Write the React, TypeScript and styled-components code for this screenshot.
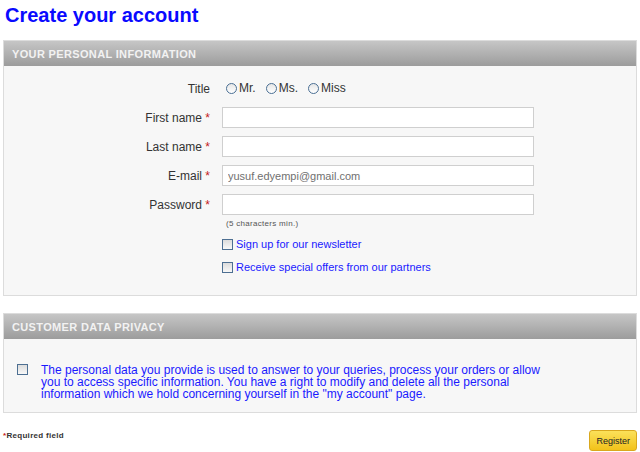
import React from 'react';
import styled, { createGlobalStyle } from 'styled-components';

const GlobalStyle = createGlobalStyle`
    html, body {
        margin: 0;
        padding: 0;
        background: #ffffff;
        font-family: Arial, "Liberation Sans", sans-serif;
    }
`;

const fields = [
    { label: 'First name', value: '' },
    { label: 'Last name', value: '' },
    { label: 'E-mail', value: 'yusuf.edyempi@gmail.com' },
    { label: 'Password', value: '', type: 'password' },
];

const App: React.FC = () => {
    return (
        <Page>
            <GlobalStyle />
            <PageTitle>Create your account</PageTitle>

            <Panel>
                <PanelHeader>Your personal information</PanelHeader>
                <PanelBody>
                    <FormGrid>
                        <Label>Title</Label>
                        <RadioGroup>
                            {['Mr.', 'Ms.', 'Miss'].map((t) => (
                                <RadioOption key={t}>
                                    <Radio />
                                    {t}
                                </RadioOption>
                            ))}
                        </RadioGroup>

                        {fields.map((f) => (
                            <React.Fragment key={f.label}>
                                <Label>
                                    {f.label} <Required>*</Required>
                                </Label>
                                <TextInput type={f.type || 'text'} defaultValue={f.value} />
                            </React.Fragment>
                        ))}

                        <span />
                        <Hint>(5 characters min.)</Hint>

                        <span />
                        <CheckList>
                            <CheckOption>
                                <CheckBox />
                                Sign up for our newsletter
                            </CheckOption>
                            <CheckOption>
                                <CheckBox />
                                Receive special offers from our partners
                            </CheckOption>
                        </CheckList>
                    </FormGrid>
                </PanelBody>
            </Panel>

            <Panel>
                <PanelHeader>Customer data privacy</PanelHeader>
                <PrivacyBody>
                    <CheckBox />
                    <PrivacyText>
                        The personal data you provide is used to answer to your queries, process your orders or allow
                        you to access specific information. You have a right to modify and delete all the personal
                        information which we hold concerning yourself in the "my account" page.
                    </PrivacyText>
                </PrivacyBody>
            </Panel>

            <Footer>
                <RequiredNote>
                    <Required>*</Required>Required field
                </RequiredNote>
                <RegisterButton>Register</RegisterButton>
            </Footer>
        </Page>
    );
};

const Page = styled.div`
    width: 640px;
    padding: 0 3px;
    box-sizing: border-box;
`;

const PageTitle = styled.h1`
    margin: 0;
    padding: 3px 2px 0;
    height: 40px;
    box-sizing: border-box;
    font-size: 20px;
    font-weight: bold;
    color: #0a0aff;
    line-height: 24px;
`;

const Panel = styled.section`
    border: 1px solid #dcdcdc;
    background: #f7f7f7;
    margin-bottom: 17px;
`;

const PanelHeader = styled.h2`
    margin: 0;
    height: 25px;
    padding: 1px 8px 0;
    box-sizing: border-box;
    line-height: 24px;
    background: linear-gradient(#c6c6c6, #9c9c9c);
    color: #f2f2f2;
    font-size: 11px;
    font-weight: bold;
    text-transform: uppercase;
    letter-spacing: 0.35px;
`;

const PanelBody = styled.div`
    padding: 12px 0 22px;
`;

const FormGrid = styled.div`
    display: grid;
    grid-template-columns: 206px 312px;
    column-gap: 12px;
    row-gap: 8px;
    align-items: center;
`;

const Label = styled.label`
    text-align: right;
    font-size: 12px;
    color: #333333;
    white-space: nowrap;
`;

const Required = styled.span`
    color: #c41a1a;
`;

const RadioGroup = styled.div`
    display: flex;
    gap: 10px;
    height: 20px;
    align-items: center;
    margin-bottom: 1px;
    padding-left: 4px;
`;

const RadioOption = styled.span`
    display: inline-flex;
    align-items: center;
    gap: 2px;
    font-size: 12px;
    color: #333333;
`;

const Radio = styled.span`
    width: 9px;
    height: 9px;
    border: 1px solid #4a6f94;
    border-radius: 50%;
    background: linear-gradient(#e6e6e6, #ffffff);
`;

const TextInput = styled.input`
    height: 21px;
    box-sizing: border-box;
    border: 1px solid #cfcfcf;
    background: #ffffff;
    padding: 0 5px;
    font-size: 11px;
    font-family: Arial, "Liberation Sans", sans-serif;
    color: #707070;
    outline: none;
`;

const Hint = styled.span`
    font-size: 8px;
    color: #555555;
    padding-left: 4px;
    margin-top: -4px;
    letter-spacing: 0.3px;
`;

const CheckList = styled.div`
    display: flex;
    flex-direction: column;
    gap: 12px;
    margin-top: 3px;
`;

const CheckOption = styled.label`
    display: inline-flex;
    align-items: center;
    gap: 3px;
    font-size: 11px;
    color: #1a1aff;
    line-height: 11px;
`;

const CheckBox = styled.span`
    flex: none;
    width: 9px;
    height: 9px;
    border: 1px solid #4d6f92;
    background: linear-gradient(#dcdcdc, #f8f8f8);
`;

const PrivacyBody = styled.div`
    display: flex;
    align-items: flex-start;
    gap: 13px;
    padding: 25px 13px 12px;
`;

const PrivacyText = styled.p`
    margin: 0;
    width: 510px;
    font-size: 12px;
    line-height: 12px;
    color: #1a1aff;
`;

const Footer = styled.footer`
    display: flex;
    justify-content: space-between;
    align-items: flex-start;
`;

const RequiredNote = styled.span`
    font-size: 8px;
    font-weight: bold;
    color: #333333;
    letter-spacing: 0.3px;
    padding-top: 1px;
`;

const RegisterButton = styled.button`
    height: 21px;
    padding: 0 6px;
    border: 1px solid #d9a81e;
    border-radius: 3px;
    background: linear-gradient(#fbe15a, #f2c21a);
    font-family: Arial, "Liberation Sans", sans-serif;
    font-size: 9px;
    color: #222222;
    cursor: pointer;
`;

export default App;
